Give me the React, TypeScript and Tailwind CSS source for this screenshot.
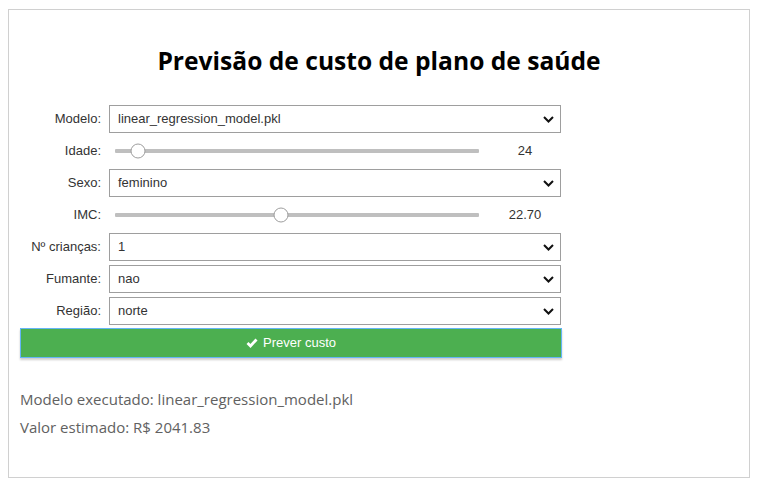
import React from "react";

const labelCls =
  "w-[81px] shrink-0 text-right pr-0 text-[13px] text-[#333] leading-[28px] whitespace-nowrap";

function Chevron() {
  return (
    <svg width="11" height="7" viewBox="0 0 11 7" className="shrink-0">
      <polyline points="1,1 5.5,5.5 10,1" fill="none" stroke="#111" strokeWidth="2" />
    </svg>
  );
}

function SelectRow({ label, value }: { label: string; value: string }) {
  return (
    <div className="flex items-center h-[28px] my-[2px] gap-[8px]">
      <div className={labelCls}>{label}</div>
      <div className="w-[452px] h-[28px] border border-[#9e9e9e] bg-white flex items-center justify-between pl-[8px] pr-[6px]">
        <span className="text-[13px] text-[#333]">{value}</span>
        <Chevron />
      </div>
    </div>
  );
}

function SliderRow({ label, value, pct }: { label: string; value: string; pct: number }) {
  return (
    <div className="flex items-center h-[28px] my-[2px] gap-[8px]">
      <div className={labelCls}>{label}</div>
      <div className="w-[376px] h-[28px] flex items-center px-[6px]">
        <div className="relative w-full h-[4px] bg-[#bfbfbf] rounded-[1px]">
          <div
            className="absolute top-1/2 -translate-y-1/2 -translate-x-1/2 w-[15px] h-[15px] rounded-full bg-white border border-[#9e9e9e]"
            style={{ left: `${pct}%` }}
          />
        </div>
      </div>
      <div className="w-[64px] text-center text-[13px] text-[#333] leading-[28px]">{value}</div>
    </div>
  );
}

export default function App() {
  return (
    <div
      className="bg-white w-[759px] h-[487px] pt-[9px] pl-[8px]"
      style={{ fontFamily: '"Liberation Sans", Arial, sans-serif' }}
    >
      <div className="w-[742px] h-[469px] border border-[#d0d0d0] pl-[11px]">
        <div
          className="text-center font-bold text-[24.6px] text-black h-[93px] pt-[35px] leading-[32px] pr-[11px]"
          style={{ fontFamily: '"Open Sans", "Noto Sans", sans-serif' }}
        >
          Previsão de custo de plano de saúde
        </div>
        <div className="flex flex-col">
          <SelectRow label="Modelo:" value="linear_regression_model.pkl" />
          <SliderRow label="Idade:" value="24" pct={6.3} />
          <SelectRow label="Sexo:" value="feminino" />
          <SliderRow label="IMC:" value="22.70" pct={45.6} />
          <SelectRow label="Nº crianças:" value="1" />
          <SelectRow label="Fumante:" value="nao" />
          <SelectRow label="Região:" value="norte" />
          <button className="mt-[1px] w-[542px] h-[30px] bg-[#4caf50] border border-[#64b5f6] shadow-[0_2px_2px_rgba(0,0,0,0.2)] text-white text-[13px] flex items-center justify-center gap-[5px]">
            <svg width="12" height="10" viewBox="0 0 12 10">
              <polyline points="1.5,5 4.5,8 10.5,1.5" fill="none" stroke="#fff" strokeWidth="2.8" />
            </svg>
            <span>Prever custo</span>
          </button>
          <div
            className="mt-[27px] text-[15px] text-[#616161] leading-[28px]"
            style={{ fontFamily: '"Open Sans", "Noto Sans", sans-serif' }}
          >
            <div>Modelo executado: linear_regression_model.pkl</div>
            <div>Valor estimado: R$ 2041.83</div>
          </div>
        </div>
      </div>
    </div>
  );
}
